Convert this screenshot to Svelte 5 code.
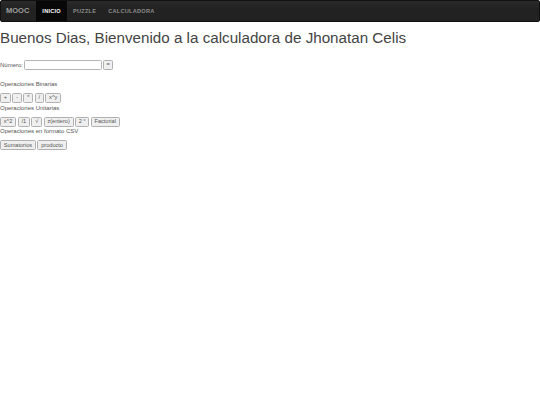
<script>
	let binarias = ["+", "-", "*", "/", "x^y"];
	let unarias = ["x^2", "/1", "√", "z(entero)", "2 ˣ", "Factorial"];
	let csv = ["Sumatorios", "producto"];
</script>

<nav class="navbar">
	<span class="brand">MOOC</span>
	<a class="active" href="#inicio">INICIO</a>
	<a href="#puzzle">PUZZLE</a>
	<a href="#calculadora">CALCULADORA</a>
</nav>

<h1>Buenos Dias, Bienvenido a la calculadora de Jhonatan Celis</h1>

<div class="numero">
	<label for="num">Número:</label>
	<input id="num" type="text" />
	<button class="igual">=</button>
</div>

<p class="first">Operaciones Binarias</p>
<div class="row">
	{#each binarias as op}
		<button>{op}</button>
	{/each}
</div>

<p>Operaciones Unitarias</p>
<div class="row">
	{#each unarias as op}
		<button>{op}</button>
	{/each}
</div>

<p>Operaciones en formato CSV</p>
<div class="row">
	{#each csv as op}
		<button>{op}</button>
	{/each}
</div>

<style>
	:global(body) {
		margin: 0;
		background: #fff;
		color: #555;
		font-family: "Liberation Sans", Arial, sans-serif;
		font-size: 6px;
		line-height: 8px;
	}

	.navbar {
		display: flex;
		align-items: stretch;
		height: 22px;
		box-sizing: border-box;
		background: linear-gradient(#2a2a2a, #222 40%);
		border: 1px solid #111;
		border-radius: 2px;
	}

	.brand {
		display: flex;
		align-items: center;
		padding: 0 7px 0 5px;
		font-size: 7.5px;
		font-weight: bold;
		color: #9d9d9d;
	}

	.navbar a {
		display: flex;
		align-items: center;
		padding: 0 6px;
		font-size: 5.6px;
		font-weight: bold;
		letter-spacing: 0.25px;
		color: #8c8c8c;
		text-decoration: none;
	}

	.navbar a.active {
		color: #fff;
		background: #080808;
	}

	h1 {
		margin: 7px 0 12.5px;
		font-size: 15.2px;
		font-weight: 400;
		line-height: 18px;
		color: #444;
	}

	.numero {
		display: flex;
		align-items: center;
		gap: 1px;
		height: 11px;
	}

	input {
		width: 78px;
		height: 10px;
		box-sizing: border-box;
		padding: 0 2px;
		border: 1px solid #b5b5b5;
		border-radius: 1.5px;
		background: #fff;
	}

	p {
		margin: 0;
		height: 8px;
	}

	p.first {
		margin-top: 9.5px;
	}

	.row {
		display: flex;
		align-items: center;
		gap: 1.5px;
		margin: 5px 0 0.7px;
		height: 10px;
	}

	button {
		height: 10px;
		box-sizing: border-box;
		padding: 0 2.8px;
		font-family: inherit;
		font-size: 5.6px;
		line-height: 1;
		color: #555;
		background: #efefef;
		border: 1px solid #b0b0b0;
		border-radius: 1.5px;
	}

	.igual {
		padding: 0 2.5px;
	}
</style>
